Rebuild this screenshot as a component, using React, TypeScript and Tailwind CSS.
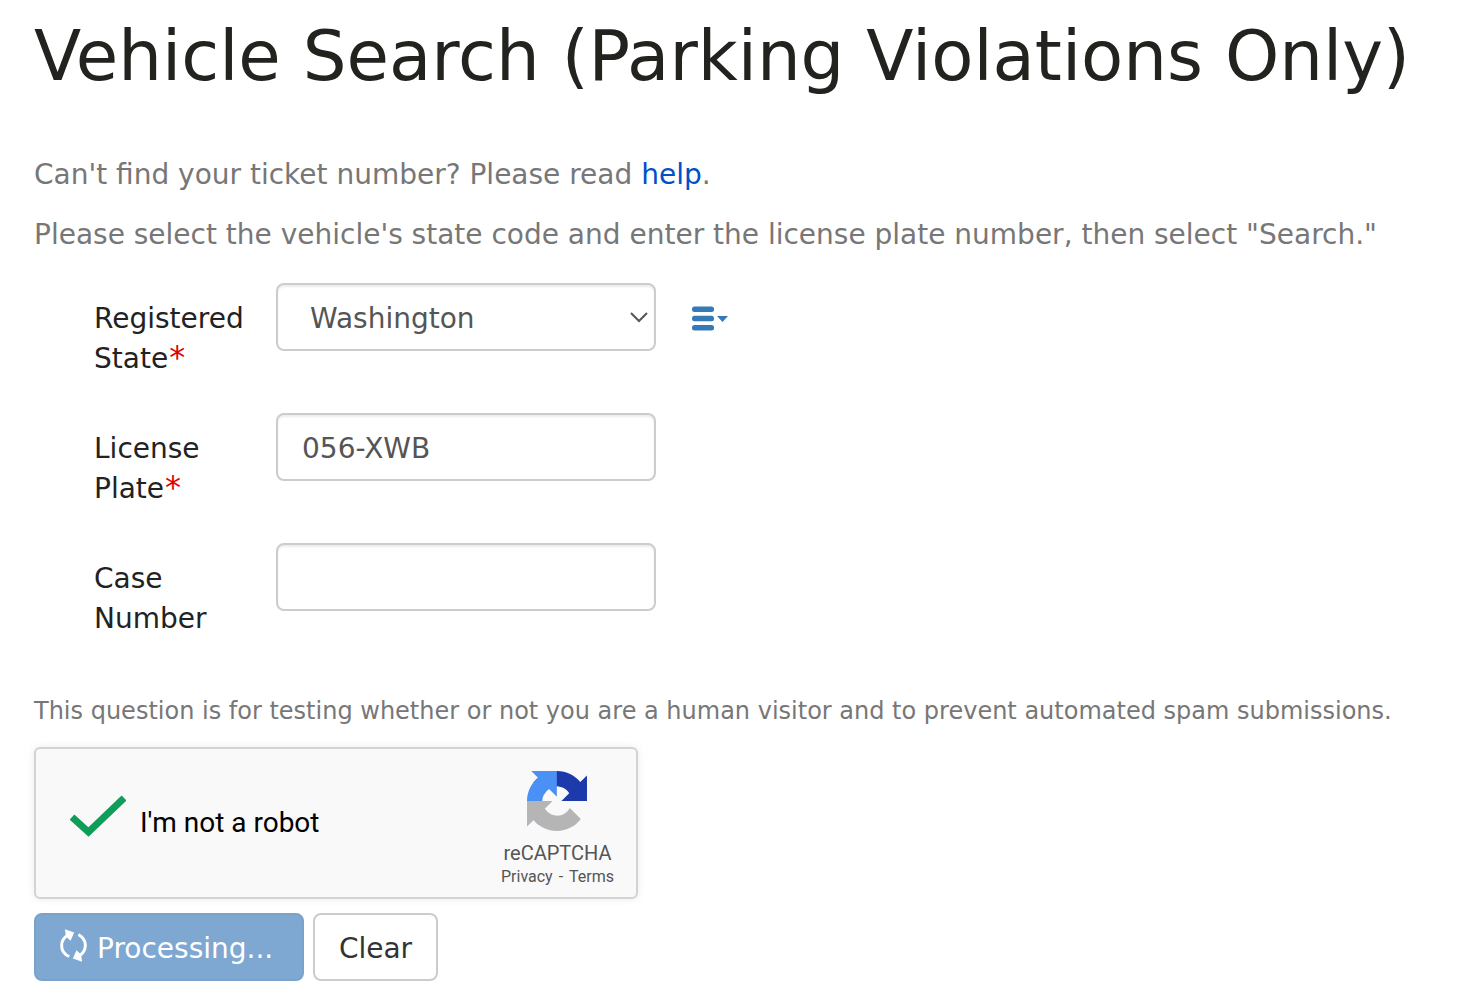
import { useState } from "react";

const fieldClass =
  "h-[68px] w-full rounded-lg border-2 border-[#ccc] bg-white text-[28px] text-[#555] shadow-[inset_0_2px_2px_rgba(0,0,0,0.075)] outline-none focus:border-[#66afe9]";

function FormRow({
  id,
  label,
  required,
  children,
  after,
}: {
  id: string;
  label: string;
  required?: boolean;
  children: React.ReactNode;
  after?: React.ReactNode;
}) {
  return (
    <div className="flex items-start">
      <label
        htmlFor={id}
        className="w-[182px] shrink-0 pt-4 pr-6 text-[28px] leading-10 text-[#222]"
      >
        {label}
        {required && <span className="ml-px text-[32px] leading-8 text-[#e00000]">*</span>}
      </label>
      <div className="relative w-[380px]">{children}</div>
      {after}
    </div>
  );
}

function RefreshIcon() {
  return (
    <svg viewBox="0 0 82 99" className="mb-1 h-[33px] w-[27px]" aria-hidden="true">
      <g fill="none" stroke="#fff" strokeWidth="9">
        <path d="M28 83C13 76 5 64 5 50c0-15 8-26 21-33" />
        <path d="M56 16c13 8 21 19 21 33 0 14-7 25-19 32" />
      </g>
      <path fill="#fff" d="M15 0l28 10-11 25-14-13zM67 99L39 89l11-25 14 13z" />
    </svg>
  );
}

function ListMenuIcon() {
  return (
    <svg viewBox="0 0 36 26" className="h-[26px] w-9" aria-hidden="true" fill="#337ab7">
      <rect x="0" y="0.500" width="22" height="5.500" rx="2.500" />
      <rect x="0" y="9.800" width="22" height="5.500" rx="2.500" />
      <rect x="0" y="19" width="22" height="5.500" rx="2.500" />
      <path d="M25 10h11l-5.500 6z" />
    </svg>
  );
}

function RecaptchaLogo() {
  return (
    <svg viewBox="0 0 64 64" className="h-[60px] w-[60px]" aria-hidden="true">
      <path
        fill="#1c3aa9"
        d="M64 31.955l-.033-1.37V4.687l-7.16 7.16C50.948 4.674 42.033.093 32.05.093c-10.4 0-19.622 4.96-25.458 12.64l11.736 11.86a15.55 15.55 0 0 1 4.754-5.334c2.05-1.6 4.952-2.906 8.968-2.906.485 0 .86.057 1.135.163 4.976.393 9.288 3.14 11.828 7.124l-8.307 8.307L64 31.953"
      />
      <path
        fill="#4a90f5"
        d="M31.862.094l-1.37.033H4.594l7.16 7.16C4.58 13.147 0 22.06 0 32.046c0 10.4 4.96 19.622 12.64 25.458L24.5 45.768a15.55 15.55 0 0 1-5.334-4.754c-1.6-2.05-2.906-4.952-2.906-8.968 0-.485.057-.86.163-1.135.393-4.976 3.14-9.288 7.124-11.828l8.307 8.307L31.86.095"
      />
      <path
        fill="#b5b5b5"
        d="M.001 32.045l.033 1.37v25.898l7.16-7.16c5.86 7.173 14.774 11.754 24.76 11.754 10.4 0 19.622-4.96 25.458-12.64l-11.736-11.86a15.55 15.55 0 0 1-4.754 5.334c-2.05 1.6-4.952 2.906-8.968 2.906-.485 0-.86-.057-1.135-.163-4.976-.393-9.288-3.14-11.828-7.124l8.307-8.307c-10.522.04-22.4.066-27.295-.005"
      />
    </svg>
  );
}

function Recaptcha() {
  const [checked, setChecked] = useState(true);

  return (
    <div className="flex h-[152px] w-[604px] max-w-full justify-between rounded-md border-2 border-[#d3d3d3] bg-[#f9f9f9] font-[Roboto,sans-serif] shadow-[0_0_8px_rgba(0,0,0,0.08)]">
      <label className="flex items-center gap-[14px] pl-[34px] text-[28px] text-black">
        <input
          type="checkbox"
          className="sr-only"
          checked={checked}
          onChange={(e) => setChecked(e.target.checked)}
        />
        <svg viewBox="0 0 56 56" className="size-14" aria-hidden="true">
          {checked ? (
            <path d="M2 22l16.500 15L54 3" fill="none" stroke="#0f9d58" strokeWidth="7" />
          ) : (
            <rect x="2" y="2" width="52" height="52" rx="4" fill="#fff" stroke="#c1c1c1" strokeWidth="4" />
          )}
        </svg>
        I'm not a robot
      </label>
      <div className="flex flex-col items-center pt-[22px] pr-[22px] text-[#555]">
        <RecaptchaLogo />
        <div className="mt-2.5 text-xl leading-6">reCAPTCHA</div>
        <div className="text-base leading-6">
          <a href="#privacy">Privacy</a>
          <span className="mx-0.5"> - </span>
          <a href="#terms">Terms</a>
        </div>
      </div>
    </div>
  );
}

export default function App() {
  const [state, setState] = useState("WA");
  const [plate, setPlate] = useState("056-XWB");
  const [caseNumber, setCaseNumber] = useState("");

  return (
    <main className="min-h-screen bg-white px-[34px] pt-4 pb-6 font-[Verdana,'DejaVu_Sans',sans-serif]">
      <h1 className="text-[69px] leading-20 whitespace-nowrap text-[#22221f]">
        Vehicle Search (Parking Violations Only)
      </h1>

      <div className="mt-[59px] flex flex-col gap-5 text-[28px] leading-10 text-[#777]">
        <p>
          Can't find your ticket number? Please read{" "}
          <a href="#help" className="text-[#0050c8]">help</a>.
        </p>
        <p>
          Please select the vehicle's state code and enter the license plate number, then select
          "Search."
        </p>
      </div>

      <form onSubmit={(e) => e.preventDefault()}>
        <div className="mt-7 flex flex-col gap-[34px] pl-[60px]">
          <FormRow
            id="state"
            label="Registered State"
            required
            after={
              <button type="button" aria-label="State list" className="ml-9 flex h-[72px] items-center">
                <ListMenuIcon />
              </button>
            }
          >
            <select
              id="state"
              value={state}
              onChange={(e) => setState(e.target.value)}
              className={`${fieldClass} appearance-none px-8 pt-1`}
            >
              <option value="WA">Washington</option>
              <option value="OR">Oregon</option>
              <option value="ID">Idaho</option>
            </select>
            <svg
              viewBox="0 0 18 11"
              className="pointer-events-none absolute top-[29px] right-2 h-[11px] w-[18px]"
              aria-hidden="true"
            >
              <path d="M1 1l8 8 8-8" fill="none" stroke="#555" strokeWidth="2" />
            </svg>
          </FormRow>
          <FormRow id="plate" label="License Plate" required>
            <input
              id="plate"
              type="text"
              value={plate}
              onChange={(e) => setPlate(e.target.value)}
              className={`${fieldClass} px-6 pt-0.5`}
            />
          </FormRow>
          <FormRow id="case" label="Case Number">
            <input
              id="case"
              type="text"
              value={caseNumber}
              onChange={(e) => setCaseNumber(e.target.value)}
              className={`${fieldClass} px-6 pt-0.5`}
            />
          </FormRow>
        </div>

        <p className="mt-[52px] mb-4 text-[24px] leading-10 text-[#777]">
          This question is for testing whether or not you are a human visitor and to prevent
          automated spam submissions.
        </p>

        <Recaptcha />

        <div className="mt-3.5 flex gap-[9px] text-[28px]">
          <button
            type="submit"
            className="flex h-[68px] w-[270px] items-center gap-2.5 rounded-lg border-2 border-[#7aa2cb] bg-[#7ea7d2] pl-6 text-white"
          >
            <RefreshIcon />
            <span className="pt-1">Processing...</span>
          </button>
          <button
            type="button"
            onClick={() => {
              setPlate("");
              setCaseNumber("");
            }}
            className="h-[68px] w-[125px] rounded-lg border-2 border-[#ccc] bg-white pt-1 text-[#333]"
          >
            Clear
          </button>
        </div>
      </form>
    </main>
  );
}
